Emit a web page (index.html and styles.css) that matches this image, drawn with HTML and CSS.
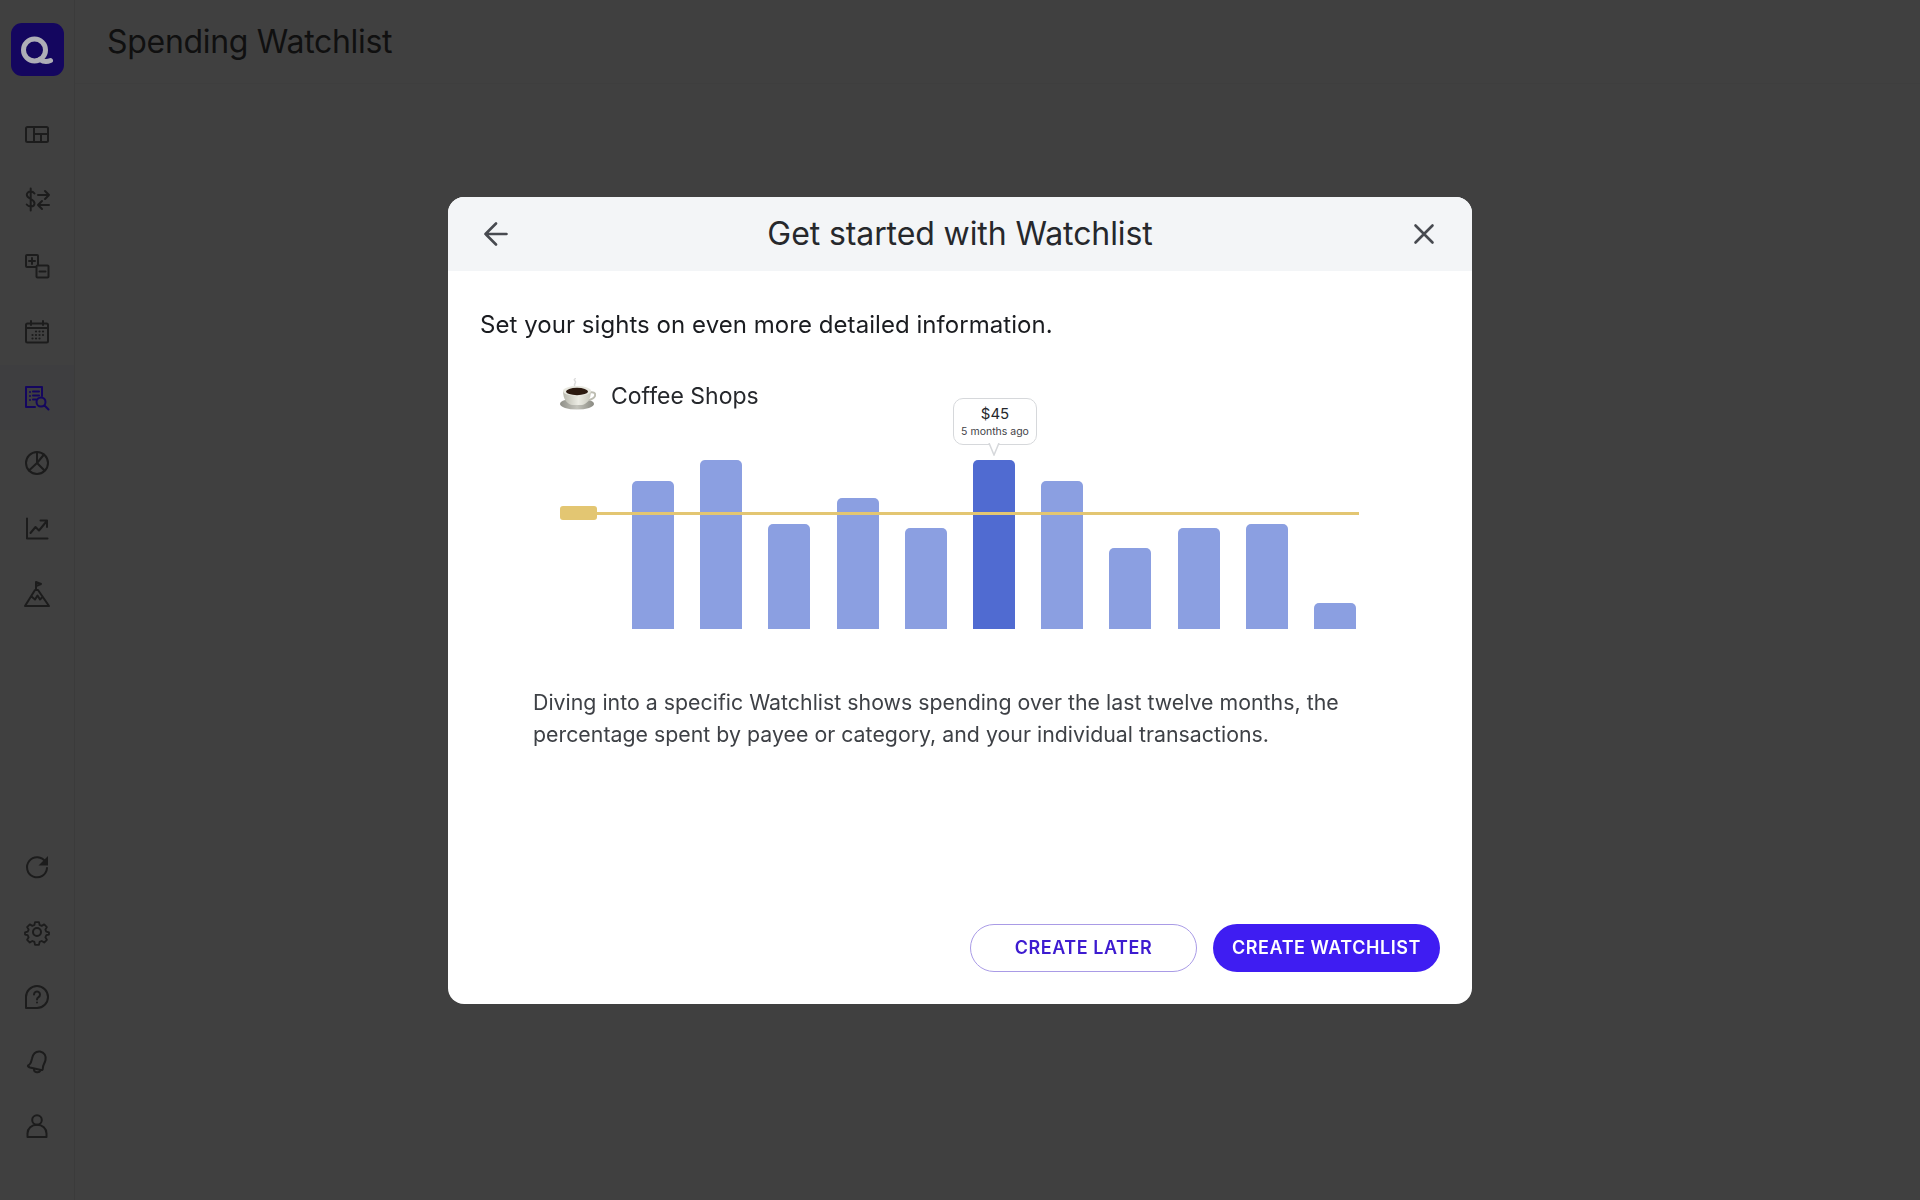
FILE: index.html
```html
<!DOCTYPE html>
<html lang="en">
<head>
<meta charset="utf-8">
<title>Spending Watchlist</title>
<link rel="stylesheet" href="styles.css">
</head>
<body>
<div class="app">
  <aside class="sidebar">
    <div class="logo">
      <svg width="53" height="53" viewBox="0 0 53 53" fill="none" stroke="#aeaeb6" stroke-width="5" stroke-linecap="round"><circle cx="23.500" cy="27" r="11"/><path d="M29 36.500c3.500 2.500 7 2.500 10.500 1"/></svg>
    </div>
    <nav class="nav">
      <a class="nav-item"><svg class="icon" viewBox="0 0 24 24"><rect x="1" y="4" width="22" height="15" rx="1.500"/><path d="M9 4v15M9 11h14M16 11v8"/></svg></a>
      <a class="nav-item"><svg class="icon" viewBox="0 1.500 24 24"><path d="M9.500 6C8.500 4.500 7 4 5.500 4 3.500 4 1.800 5.300 1.800 7.300c0 4.500 7.700 3.500 7.700 8.500 0 2-1.700 3.200-3.800 3.200-1.700 0-3-.7-4-2M5.700 1v22M13 7.500h11M20 3.500l4 4-4 4M24 17.500H13M17 13.500l-4 4 4 4"/></svg></a>
      <a class="nav-item"><svg class="icon" viewBox="0 0 24 24"><rect x="1" y="1" width="12" height="12" rx="1"/><rect x="11.500" y="11.500" width="12" height="12" rx="1" class="icon-fill"/><path d="M7 4v6M4 7h6M14.500 17.500h6"/></svg></a>
      <a class="nav-item"><svg class="icon" viewBox="0 0 24 24"><rect x="1" y="3.500" width="22" height="19" rx="1.500"/><path d="M1 8h22M6 1v4M18 1v4"/><path class="dots" d="M11 11.500h.01M14.500 11.500h.01M18 11.500h.01M7.500 15h.01M11 15h.01M14.500 15h.01M18 15h.01M7.500 18.500h.01M11 18.500h.01M14.500 18.500h.01"/></svg></a>
      <a class="nav-item is-active"><svg class="icon" viewBox="0 0 24 24"><path d="M17 10V1H1v20h9"/><path d="M5 6h.01M5 10h.01M5 14h.01M8 5.500h6M8 9.500h6M8 13.500h3"/><circle cx="16" cy="16" r="4.500"/><path d="M19.500 19.500l4 4"/></svg></a>
      <a class="nav-item"><svg class="icon" viewBox="0 0 24 24"><circle cx="12" cy="12" r="11"/><path d="M12 1.500v10.500l-8 7.500M12 12l7.500 7.500M12 12l7-8.500"/></svg></a>
      <a class="nav-item"><svg class="icon" viewBox="0 0 24 24"><path d="M2 1.500v20h20.500M5.500 16l5-6 3.500 3.500 7-8.500M15.500 3.500h6.500V10"/></svg></a>
      <a class="nav-item"><svg class="icon" viewBox="0 0 24 24"><path d="M0 23L10 7h3l11 16zM11 7V-1l5 2-5 2M6.500 13.500l3.500 3 2.500-4 2.500 4 1.500-1.500"/></svg></a>
    </nav>
    <nav class="nav nav-bottom">
      <a class="nav-item"><svg class="icon" viewBox="0 0 24 24"><path d="M20.500 7A10 10 0 1 0 22 13"/><path class="icon-solid" d="M23 1v9.500h-9.500z"/></svg></a>
      <a class="nav-item"><svg class="icon" viewBox="0 0 24 24"><circle cx="12" cy="12" r="4"/><path d="M9.800 1h4.400l.7 3.200 2.300 1 2.800-1.700 3 3-1.700 2.800 1 2.300 3 .7v2.600l-3 .7-1 2.300 1.700 2.800-3 3-2.800-1.700-2.300 1-.7 3.200H9.800l-.7-3.200-2.300-1-2.800 1.700-3-3 1.700-2.800-1-2.300-3-.7v-2.600l3-.7 1-2.300L1 6.500l3-3 2.800 1.700 2.300-1z" transform="translate(1.200 1.200) scale(.9)"/></svg></a>
      <a class="nav-item"><svg class="icon" viewBox="0 0 24 24"><path d="M1 23V12a11 11 0 1 1 11 11z"/><path d="M9 9.500a3 3 0 1 1 4.500 2.600c-1 .6-1.500 1.200-1.500 2.400M12 17.500h.01"/></svg></a>
      <a class="nav-item"><svg class="icon" viewBox="0 0 24 24"><path d="M3 15.500c3-1 3-3 4-7C8 4 10.500 1 15 1.500c4.500.8 6.300 4.300 5.500 8.500-.8 3.800-2.800 4.800-2.700 8.500.1 1.400-.6 1.800-1.800 1.400L5 17.500c-1.500-.5-2.500-1.300-2-2z"/><path d="M9 19.500c0 3 5 4 6.500 1"/></svg></a>
      <a class="nav-item"><svg class="icon" viewBox="0 1 24 24"><circle cx="12" cy="6" r="4.800"/><path d="M2.500 23v-3.500c0-5 4-8.700 9.500-8.700s9.500 3.700 9.500 8.700V23z"/></svg></a>
    </nav>
  </aside>
  <main class="main">
    <header class="topbar"><h1 class="page-title">Spending Watchlist</h1></header>
  </main>
</div>

<div class="overlay">
  <section class="modal">
    <header class="modal-head">
      <button class="icon-btn" aria-label="Back"><svg width="24" height="24" viewBox="0 0 24 24"><path d="M22.500 12H1.500M12 1.500L1.500 12 12 22.500"/></svg></button>
      <h2 class="modal-title">Get started with Watchlist</h2>
      <button class="icon-btn" aria-label="Close"><svg width="24" height="24" viewBox="0 0 24 24"><path d="M3.500 3.500l17 17M20.500 3.500l-17 17"/></svg></button>
    </header>
    <div class="modal-body">
      <p class="lead">Set your sights on even more detailed information.</p>
      <div class="chart-block">
        <div class="chart-title">
          <svg class="cup" width="36" height="32" viewBox="0 0 36 32">
            <defs>
              <linearGradient id="saucer" x1="0" y1="0" x2="1" y2="0"><stop offset="0" stop-color="#8f8f88"/><stop offset=".5" stop-color="#c4c4bc"/><stop offset="1" stop-color="#8a8a82"/></linearGradient>
              <linearGradient id="china" x1="0" y1="0" x2="1" y2="0"><stop offset="0" stop-color="#b9b9ae"/><stop offset=".55" stop-color="#ecece4"/><stop offset="1" stop-color="#c9c9be"/></linearGradient>
            </defs>
            <path d="M15 8c-2-2 2-3 0-5s1-2 0-3" fill="none" stroke="#dcdcdc" stroke-width="1.500"/>
            <ellipse cx="17" cy="26" rx="17" ry="5.500" fill="url(#saucer)"/>
            <path d="M28 15c5-2 8 0 7 3-1 3-5 4-9 5" fill="none" stroke="#bdbdb2" stroke-width="2"/>
            <path d="M3 13h28c0 8-4 13-9 14H12C7 26 3 21 3 13z" fill="url(#china)"/>
            <ellipse cx="17" cy="13" rx="14" ry="5" fill="#e8e8e0"/>
            <ellipse cx="17" cy="13.500" rx="11" ry="3.700" fill="#2c1a10"/>
          </svg>
          <span>Coffee Shops</span>
        </div>
        <div class="chart">
          <div class="bars">
            <div class="bar" style="height:148px"></div>
            <div class="bar" style="height:169px"></div>
            <div class="bar" style="height:105px"></div>
            <div class="bar" style="height:131px"></div>
            <div class="bar" style="height:101px"></div>
            <div class="bar bar-current" style="height:169px"></div>
            <div class="bar" style="height:148px"></div>
            <div class="bar" style="height:81px"></div>
            <div class="bar" style="height:101px"></div>
            <div class="bar" style="height:105px"></div>
            <div class="bar" style="height:26px"></div>
          </div>
          <div class="target-line"></div>
          <div class="target-flag"></div>
          <div class="tip">
            <span class="tip-value">$45</span>
            <span class="tip-label">5 months ago</span>
            <svg class="tip-arrow" width="12" height="13" viewBox="0 0 12 13"><path d="M1 0l5 12L11 0"/></svg>
          </div>
        </div>
      </div>
      <p class="desc">Diving into a specific Watchlist shows spending over the last twelve months, the percentage spent by payee or category, and your individual transactions.</p>
    </div>
    <footer class="modal-foot">
      <button class="btn btn-outline">CREATE LATER</button>
      <button class="btn btn-primary">CREATE WATCHLIST</button>
    </footer>
  </section>
</div>
</body>
</html>
```

FILE: styles.css
```css
* { box-sizing: border-box; }
html, body { margin: 0; height: 100%; }
body { font-family: Inter, "Noto Sans", sans-serif; background: #404040; color: #0f0f0f; overflow: hidden; }

.app { display: flex; height: 1200px; }
.sidebar { width: 75px; flex: none; display: flex; flex-direction: column; background: #404040; border-right: 1px solid #3b3b3b; padding-top: 23px; padding-bottom: 41px; }
.logo { width: 53px; height: 53px; margin-left: 11px; flex: none; border-radius: 11px; background: #14065f; }
.logo svg { display: block; }
.nav { display: flex; flex-direction: column; margin-top: 26px; }
.nav-bottom { margin-top: auto; }
.nav-item { height: 65.700px; display: flex; align-items: center; justify-content: center; }
.nav-bottom .nav-item { height: 64.800px; }
.nav-item.is-active { background: #3e3e40; }
.icon { width: 24px; height: 24px; fill: none; stroke: #1c1c1c; stroke-width: 2; stroke-linecap: round; stroke-linejoin: round; overflow: visible; }
.is-active .icon { stroke: #14065f; }
.icon-fill { fill: #404040; }
.icon-solid { fill: #1c1c1c; stroke: none; }
.dots { stroke-width: 2.200; }

.main { flex: 1; }
.topbar { height: 84px; border-bottom: 1px solid #3e3e3e; padding-left: 32px; display: flex; align-items: center; }
.page-title { margin: 0; font-size: 32px; font-weight: 400; color: #101010; letter-spacing: -.3px; }

.overlay { position: fixed; inset: 0; display: flex; align-items: center; justify-content: center; }
.modal { width: 1024px; height: 807px; background: #fff; border-radius: 16px; overflow: hidden; display: flex; flex-direction: column; }
.modal-head { height: 74px; flex: none; background: #f3f5f7; display: flex; align-items: center; justify-content: space-between; padding: 0 36px; }
.modal-title { margin: 0; font-size: 32px; font-weight: 400; color: #26282c; letter-spacing: -.1px; }
.icon-btn { padding: 0; border: 0; background: none; width: 24px; height: 24px; }
.icon-btn svg { display: block; fill: none; stroke: #474a50; stroke-width: 2.600; stroke-linecap: round; stroke-linejoin: round; }

.modal-body { flex: 1; padding: 0 32px; }
.lead { margin: 38px 0 0; font-size: 24px; line-height: 32px; letter-spacing: .05px; color: #1a1c20; }
.chart-block { margin: 34px 0 0 80px; width: 800px; }
.chart-title { display: flex; align-items: center; gap: 15px; height: 42px; font-size: 23px; color: #26282c; }
.cup { flex: none; margin-bottom: 4px; }
.chart { position: relative; height: 192px; margin-top: 20px; padding-left: 72px; }
.bars { display: flex; justify-content: space-between; align-items: flex-end; height: 192px; width: 724px; }
.bar { width: 42px; background: #8b9fe1; border-radius: 5px 5px 0 0; }
.bar-current { background: #506bd1; }
.target-line { position: absolute; left: 20px; top: 75px; width: 779px; height: 3px; background: #e3c672; }
.target-flag { position: absolute; left: 0; top: 69px; width: 37px; height: 14px; border-radius: 3px; background: #e3c672; }
.tip { position: absolute; left: 393px; top: -39px; width: 84px; height: 47px; background: #fff; border: 1.500px solid #d6d8db; border-radius: 10px; display: flex; flex-direction: column; align-items: center; justify-content: center; gap: 2px; }
.tip-arrow { position: absolute; left: 34px; top: 100%; margin-top: -1px; fill: #fff; stroke: #d6d8db; stroke-width: 1.500; }
.tip-value { font-size: 15px; line-height: 18px; color: #26282c; }
.tip-label { font-size: 10.500px; line-height: 13px; color: #3f4247; }

.desc { margin: 57px 0 0 53px; width: 830px; font-size: 21.300px; line-height: 32px; letter-spacing: .02px; color: #3e4146; }

.modal-foot { flex: none; display: flex; justify-content: flex-end; gap: 16px; padding: 0 32px 32px; }
.btn { width: 227px; height: 48px; border-radius: 24px; font: 600 18px Inter, sans-serif; letter-spacing: .55px; }
.btn-outline { background: #fff; border: 1.500px solid #a99be6; color: #3d1bd0; }
.btn-primary { background: #3f1df2; border: 0; color: #fff; }
```
